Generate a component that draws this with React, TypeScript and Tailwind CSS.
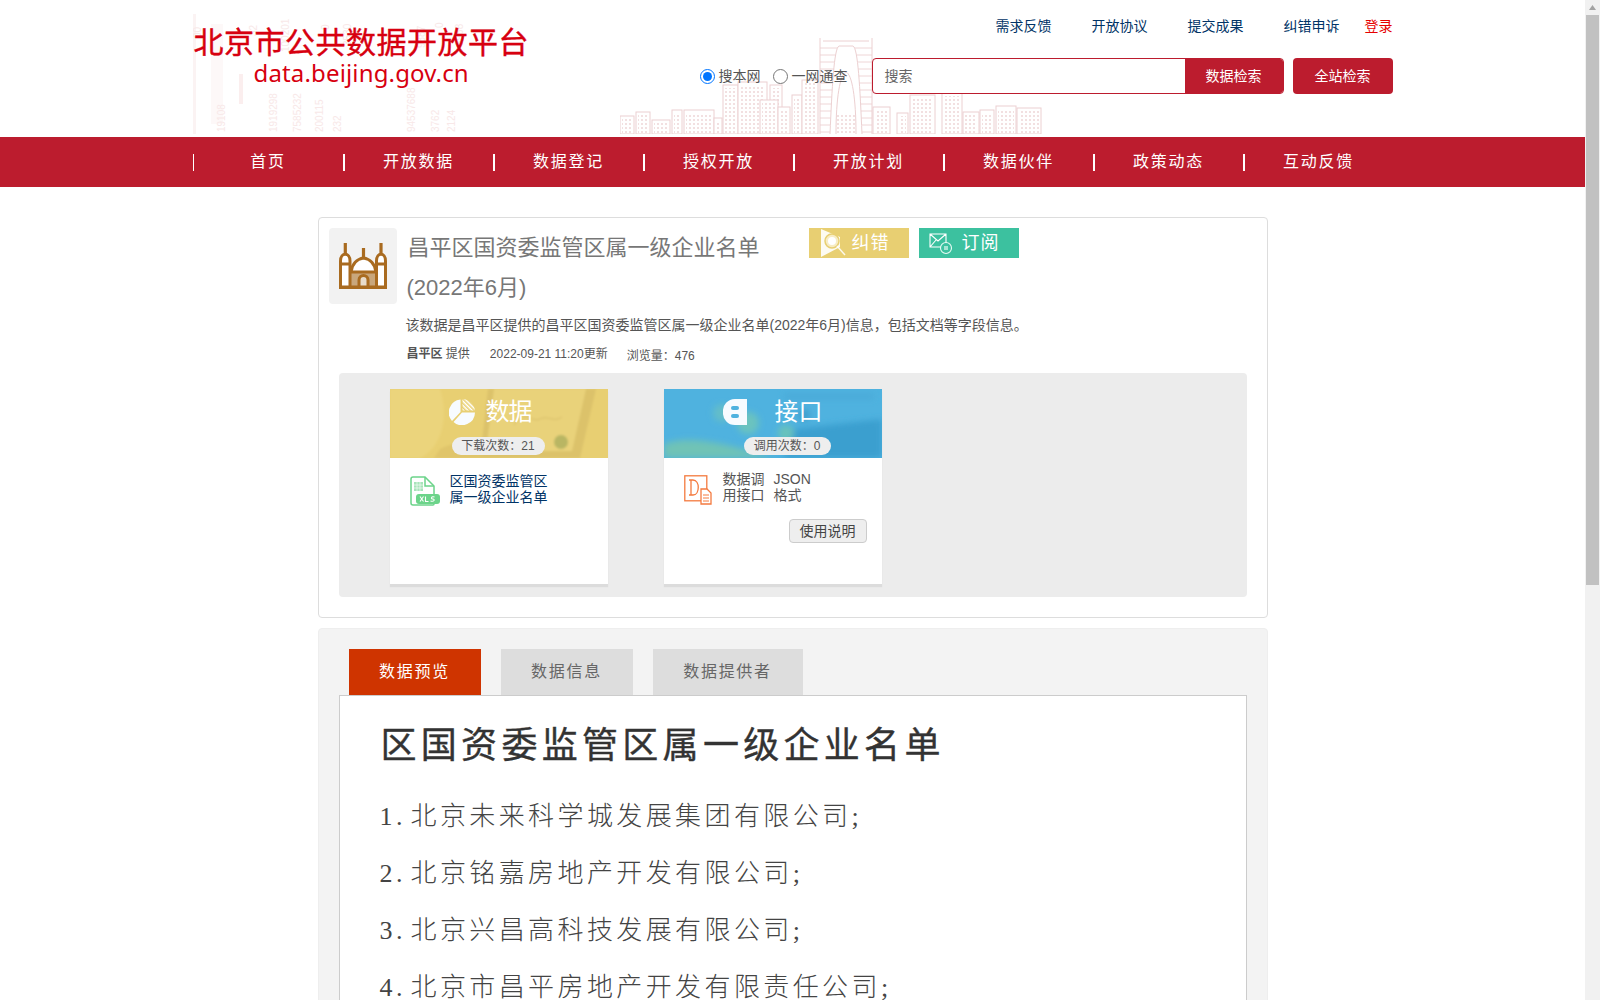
import React from "react";

const buildings: [number, number, number][] = [
  [0, 78, 14], [16, 74, 14], [32, 82, 18], [52, 72, 10], [64, 72, 30], [94, 80, 8],
  [103, 47, 15], [118, 44, 29], [150, 47, 12], [140, 62, 18], [158, 69, 12], [172, 57, 10], [182, 42, 16],
  [253, 69, 17], [277, 75, 11], [290, 57, 25], [322, 55, 20], [343, 74, 16], [360, 72, 14], [376, 68, 20], [397, 70, 24],
];

function Skyline() {
  return (
    <svg width="422" height="96" viewBox="0 0 422 96" fill="none" className="absolute left-[427px] top-[38px]">
      <defs>
        <pattern id="win" width="4" height="4" patternUnits="userSpaceOnUse">
          <rect x="1" y="1" width="2" height="2" fill="#f2e0e1" />
        </pattern>
        <pattern id="floors" width="52" height="7" patternUnits="userSpaceOnUse">
          <line x1="0" y1="3" x2="52" y2="3" stroke="#efd6d7" />
        </pattern>
      </defs>
      {buildings.map(([x, y, w], i) => (
        <g key={i}>
          <rect x={x} y={y} width={w} height={96 - y} fill="#fff" stroke="#ecd0d1" />
          <rect x={x + 2} y={y + 3} width={w - 4} height={93 - y} fill="url(#win)" />
        </g>
      ))}
      <rect x="200" y="4" width="52" height="92" fill="url(#floors)" />
      <path d="M200 0V96M252 0V96M203 3H249" stroke="#ecd0d1" />
      <path d="M210 96C212 50 214 10 219 8H233C238 10 240 50 242 96" fill="#fff" stroke="#ecd0d1" />
      <path d="M216 96C216 60 220 36 226 34C232 36 236 60 236 96" fill="#fff" stroke="#ecd0d1" />
      <rect x="216" y="76" width="20" height="20" fill="url(#win)" />
    </svg>
  );
}

function LogoBackdrop() {
  const cols: [number, number, string][] = [
    [8, 24, "00"], [64, 22, "32"], [96, 38, "100201"], [136, 16, "0"], [158, 32, "3530"], [232, 34, "9887"], [250, 14, "0"], [270, 32, "3968"],
    [32, 118, "19108"], [84, 118, "1919298"], [108, 118, "7585232"], [130, 118, "200115"], [148, 118, "232"], [222, 118, "94537688"], [246, 118, "3762"], [262, 118, "2124"],
  ];
  return (
    <svg width="330" height="120" viewBox="0 0 330 120" className="absolute left-0 top-[14px]">
      <rect x="0" y="0" width="3" height="120" fill="#fbf3f3" />
      <rect x="18" y="10" width="12" height="100" fill="#fdf8f8" />
      <rect x="46" y="60" width="4" height="30" fill="#fbeeee" />
      {cols.map(([x, y, t], i) => (
        <text key={i} transform={`translate(${x} ${y}) rotate(-90)`} fontSize="10" fontFamily="Liberation Sans" fill="#f8e8e8">
          {t}
        </text>
      ))}
    </svg>
  );
}

function Building() {
  return (
    <svg width="48" height="46" viewBox="0 0 48 46" fill="none">
      <path d="M12 45V29H37V45Z" fill="#c9a77c" />
      <path d="M12 29C13 21 18 16 24.500 15C31 16 36 21 37 29" stroke="#a96b20" strokeWidth="3" fill="#fff" />
      <path d="M1.500 45V18C1.500 9 11 9 11 18V45M37.500 45V18C37.500 9 46.500 9 46.500 18V45" stroke="#a96b20" strokeWidth="3" fill="#fff" />
      <path d="M1.500 21H11M37.500 21H46.500M11 29H38" stroke="#a96b20" strokeWidth="3" />
      <path d="M6.300 0V11M42 0V11M24.500 5V15" stroke="#a96b20" strokeWidth="3.200" />
      <path d="M20 45V37C20 31 29 31 29 37V45" stroke="#a96b20" strokeWidth="3" fill="#e8dccb" />
      <rect x="0" y="42.500" width="48" height="3.500" fill="#a96b20" />
    </svg>
  );
}

function SearchFlag() {
  return (
    <svg width="30" height="30" viewBox="0 0 30 30" fill="none">
      <path d="M1 1L20 9V19L1 29Z" fill="#fff" fillOpacity="0.9" />
      <circle cx="12" cy="13" r="7" fill="#f7ecc4" stroke="#e8cf72" strokeWidth="1.500" />
      <circle cx="12" cy="13" r="4" fill="#fff" />
      <path d="M17 18L25 27" stroke="#fff" strokeOpacity="0.85" strokeWidth="1.500" />
    </svg>
  );
}

function MailIcon() {
  return (
    <svg width="24" height="24" viewBox="0 0 24 24" fill="none">
      <path d="M1 3H17V16H1Z M1 3L9 10L17 3M1 16L7 9" stroke="#fff" strokeWidth="1.100" />
      <circle cx="17" cy="17" r="5.500" fill="#3cc19f" stroke="#e8fbf5" strokeWidth="1.100" />
      <rect x="15" y="15" width="4" height="4" fill="#a5e5d3" />
    </svg>
  );
}

function Pie() {
  return (
    <svg width="26" height="26" viewBox="0 0 26 26">
      <defs>
        <pattern id="hatch" width="3" height="3" patternUnits="userSpaceOnUse" patternTransform="rotate(45)">
          <rect width="3" height="1.500" fill="#fff" />
        </pattern>
      </defs>
      <path d="M11.500 0.500V13L3 22A13 13 0 0 1 11.500 0.500Z" fill="#f7fbff" />
      <path d="M13.500 0A13 13 0 0 1 26 11.500H13.500Z" fill="url(#hatch)" />
      <path d="M13 13.500H26A13 13 0 0 1 4.500 23Z" fill="#f7fbff" />
    </svg>
  );
}

function ApiIcon() {
  return (
    <svg width="24" height="26" viewBox="0 0 24 26">
      <path d="M12 0H24V26H12A12 12 0 0 1 0 13A12 12 0 0 1 12 0Z" fill="#f7fbff" />
      <rect x="8" y="7" width="8" height="4" rx="2" fill="#4fb2df" />
      <rect x="8" y="15" width="8" height="4" rx="2" fill="#4fb2df" />
    </svg>
  );
}

function XlsIcon() {
  return (
    <svg width="30" height="30" viewBox="0 0 30 30" fill="none">
      <path d="M1 3A2 2 0 0 1 3 1H15L24 10V28A1 1 0 0 1 23 29H3A2 2 0 0 1 1 27Z" fill="#fff" stroke="#6cd48a" strokeWidth="1.500" />
      <path d="M15 1V10H24" stroke="#6cd48a" strokeWidth="1.500" />
      <rect x="4" y="6" width="9" height="9" fill="#a8e4ba" />
      <path d="M4 9H13M4 12H13M7 6V15M10 6V15" stroke="#fff" strokeWidth="0.600" />
      <rect x="6" y="18" width="24" height="10" rx="3" fill="#6cd48a" />
      <path d="M10 20.500L13.500 25.500M13.500 20.500L10 25.500M15.500 20.500V25.500H18.500M24.500 21C21 20 20.500 23 23 23C25 23.300 24.500 26 20.500 25" stroke="#fff" strokeWidth="1.100" />
    </svg>
  );
}

function DocIcon() {
  return (
    <svg width="28" height="30" viewBox="0 0 28 30" fill="none">
      <rect x="0.800" y="0.800" width="22" height="25" fill="#fff" stroke="#f47a3f" strokeWidth="1.300" />
      <path d="M5 5H9C16 5 16 20 9 20H5M7 5V20" stroke="#f47a3f" strokeWidth="1.300" />
      <path d="M17 14H23L27 18V29H17Z" fill="#fff" stroke="#f47a3f" strokeWidth="1.300" />
      <path d="M19 20H25M19 23H25M19 26H25" stroke="#f47a3f" />
    </svg>
  );
}

function YellowArt() {
  return (
    <svg width="218" height="69" viewBox="0 0 218 69" className="absolute inset-0">
      <defs>
        <filter id="soft"><feGaussianBlur stdDeviation="1" /></filter>
      </defs>
      <rect width="218" height="69" fill="#e8cf72" />
      <g filter="url(#soft)">
        <path d="M0 0H50C60 30 50 60 30 69H0Z" fill="#ebd47c" />
        <path d="M98 0H206L190 69H90Z" fill="#dcc26a" />
        <path d="M104 0H196L182 62H96Z" fill="#e9d27a" />
        <path d="M124 36C134 20 142 34 150 30C158 26 164 34 172 28" stroke="#d8bf68" fill="none" />
        <circle cx="171" cy="53" r="7" fill="#b9b663" />
        <path d="M50 60C66 52 84 50 96 62L90 69H44Z" fill="#e0c56a" />
      </g>
    </svg>
  );
}

function BlueArt() {
  return (
    <svg width="218" height="69" viewBox="0 0 218 69" className="absolute inset-0">
      <defs>
        <filter id="softer"><feGaussianBlur stdDeviation="3" /></filter>
      </defs>
      <rect width="218" height="69" fill="#4fb2df" />
      <g filter="url(#softer)">
        <path d="M0 55C30 44 70 58 110 69H0Z" fill="#6fc3b6" />
        <path d="M130 40L218 30V69H120Z" fill="#3a9fcf" />
        <circle cx="58" cy="24" r="9" fill="#63bdc9" />
        <circle cx="84" cy="34" r="11" fill="#6ac3bf" />
        <circle cx="122" cy="44" r="8" fill="#69c2bc" />
        <circle cx="140" cy="26" r="6" fill="#3f9fcd" />
        <rect x="120" y="5" width="90" height="5" fill="#48a9d7" />
      </g>
    </svg>
  );
}

const navItems = ["首页", "开放数据", "数据登记", "授权开放", "开放计划", "数据伙伴", "政策动态", "互动反馈"];
const topLinks = ["需求反馈", "开放协议", "提交成果", "纠错申诉"];
const companies = [
  "北京未来科学城发展集团有限公司",
  "北京铭嘉房地产开发有限公司",
  "北京兴昌高科技发展有限公司",
  "北京市昌平房地产开发有限责任公司",
];

export default function App() {
  return (
    <div className="flex h-screen overflow-hidden bg-white font-['Liberation_Sans','Noto_Sans_CJK_SC',sans-serif]">
      <main className="min-w-0 flex-1 overflow-hidden">
        <header className="relative mx-auto flex h-[137px] w-[1200px] justify-between">
          <LogoBackdrop />
          <Skyline />
          <div className="relative pl-[1px] pt-[23px] text-[#d7000f]">
            <div className="text-[30px] font-normal leading-[40px] tracking-[0.5px] [-webkit-text-stroke:0.4px_#d7000f]">北京市公共数据开放平台</div>
            <div className="ml-[60px] mt-[-6px] font-['Noto_Sans','Noto_Sans_CJK_SC',sans-serif] text-[24px] leading-[32px] tracking-[0.15px]">data.beijing.gov.cn</div>
          </div>
          <div className="relative flex flex-col items-end">
            <div className="flex pt-[16px] text-[14px] leading-[20px]">
              {topLinks.map((t) => (
                <span key={t} className="mr-[40px] text-[#003366]">{t}</span>
              ))}
              <span className="ml-[-15px] text-[#e60000]">登录</span>
            </div>
            <div className="mt-[22px] flex items-center text-[14px] text-[#555]">
              <input type="radio" name="scope" defaultChecked className="m-0 h-[15px] w-[15px]" />
              <span className="ml-[4px]">搜本网</span>
              <input type="radio" name="scope" className="m-0 ml-[12px] h-[15px] w-[15px]" />
              <span className="ml-[4px] mr-[24px]">一网通查</span>
              <div className="flex h-[36px] w-[412px] overflow-hidden rounded-[4px] border border-[#bc1c2e] bg-white">
                <div className="flex-1 pl-[12px] leading-[34px] text-[#666]">搜索</div>
                <div className="w-[98px] bg-[#bc1c2e] text-center leading-[34px] text-white">数据检索</div>
              </div>
              <div className="ml-[9px] h-[36px] w-[100px] rounded-[4px] bg-[#bc1c2e] text-center leading-[36px] text-white">全站检索</div>
            </div>
          </div>
        </header>

        <nav className="h-[50px] bg-[#bc1c2e]">
          <div className="mx-auto flex h-full w-[1200px] items-center">
            {navItems.map((t) => (
              <div key={t} className="h-[17px] w-[150px] border-l-2 border-white text-center text-[16px] leading-[15px] tracking-[1.7px] text-white first:border-l">{t}</div>
            ))}
          </div>
        </nav>

        <section className="mx-auto mt-[30px] h-[401px] w-[950px] rounded-[4px] border border-[#ddd] bg-white p-[10px]">
          <div className="flex">
            <div className="flex h-[76px] w-[68px] items-center justify-center rounded-[4px] bg-[#f2f2f2]">
              <Building />
            </div>
            <div className="ml-[10px] flex-1">
              <div className="flex">
                <div className="w-[402px] text-[22px] leading-[40px] text-[#777]">
                  <div className="pl-[1px]">昌平区国资委监管区属一级企业名单</div>
                  <div>(2022年6月)</div>
                </div>
                <div className="flex gap-[10px]">
                  <div className="flex h-[30px] w-[100px] items-center bg-[#e8cf72] pl-[11px] text-[18px] tracking-[1px] text-white">
                    <SearchFlag />
                    <span className="ml-[2px]">纠错</span>
                  </div>
                  <div className="flex h-[30px] w-[100px] items-center bg-[#3cc19f] pl-[10px] text-[18px] tracking-[1px] text-white">
                    <MailIcon />
                    <span className="ml-[9px]">订阅</span>
                  </div>
                </div>
              </div>
              <div className="ml-[-1px] mt-[6px] text-[14px] leading-[22px] text-[#555]">该数据是昌平区提供的昌平区国资委监管区属一级企业名单(2022年6月)信息，包括文档等字段信息。</div>
              <div className="mt-[9px] flex text-[12px] leading-[18px] text-[#555]">
                <span><b>昌平区</b> 提供</span>
                <span className="ml-[20px]">2022-09-21 11:20更新</span>
                <span className="ml-[19px] mt-[2px]">浏览量：476</span>
              </div>
            </div>
          </div>

          <div className="mx-[10px] mt-[8px] flex h-[224px] gap-[56px] rounded-[4px] bg-[#ececec] pl-[51px] pt-[16px]">
            <div className="h-[195px] w-[218px] bg-white shadow-[0_3px_1px_#dcdcdc]">
              <div className="relative h-[69px] overflow-hidden pl-[59px] pt-[10px]">
                <YellowArt />
                <div className="relative flex h-[26px] items-center">
                  <Pie />
                  <span className="ml-[11px] text-[24px] tracking-[-1px] text-white">数据</span>
                </div>
                <div className="relative ml-[3px] mt-[12px] h-[18px] w-[93px] rounded-[9px] bg-[#eeeeee] text-center text-[12px] leading-[18px] text-[#555]">下载次数：21</div>
              </div>
              <div className="flex pl-[20px] pt-[15px]">
                <div className="mt-[3px]"><XlsIcon /></div>
                <div className="ml-[10px] w-[100px] text-[14px] leading-[16px] text-[#003366]">区国资委监管区属一级企业名单</div>
              </div>
            </div>
            <div className="h-[195px] w-[218px] bg-white shadow-[0_3px_1px_#dcdcdc]">
              <div className="relative h-[69px] overflow-hidden pl-[59px] pt-[10px]">
                <BlueArt />
                <div className="relative flex h-[26px] items-center">
                  <ApiIcon />
                  <span className="ml-[28px] text-[24px] text-white">接口</span>
                </div>
                <div className="relative ml-[21px] mt-[12px] h-[18px] w-[87px] rounded-[9px] bg-[#eeeeee] text-center text-[12px] leading-[18px] text-[#555]">调用次数：0</div>
              </div>
              <div className="flex pl-[20px] pt-[13px]">
                <div className="mt-[4px]"><DocIcon /></div>
                <div className="ml-[11px] w-[51px] text-[14px] leading-[16px] text-[#555]">数据调用接口</div>
                <div className="text-[14px] leading-[16px] text-[#555]"><div>JSON</div><div>格式</div></div>
              </div>
              <div className="ml-[125px] mt-[14px] h-[24px] w-[78px] rounded-[4px] border border-[#ccc] bg-[#eeeeee] text-center text-[14px] leading-[22px] text-[#444]">使用说明</div>
            </div>
          </div>
        </section>

        <section className="mx-auto mt-[10px] w-[950px] rounded-t-[4px] border border-[#eee] bg-[#f3f3f3] px-[20px] pt-[20px]">
          <div className="ml-[10px] flex gap-[20px] text-[16px] leading-[46px] tracking-[1.7px]">
            <div className="h-[46px] w-[132px] bg-[#cf3400] text-center text-white">数据预览</div>
            <div className="h-[46px] w-[132px] bg-[#dddddd] text-center text-[#666]">数据信息</div>
            <div className="h-[46px] w-[150px] bg-[#dddddd] text-center text-[#666]">数据提供者</div>
          </div>
          <div className="border border-[#ccc] bg-white pb-[20px] pl-[41px] pr-[40px] pt-[23px]">
            <h1 className="text-[36px] font-normal leading-[54px] tracking-[4.3px] text-[#333] [-webkit-text-stroke:0.4px_#333]">区国资委监管区属一级企业名单</h1>
            <ol className="ml-[-1px] mt-[15px] font-['Liberation_Serif','Noto_Sans_CJK_SC',serif] text-[26px] font-light leading-[57px] tracking-[3.4px] text-[#444]">
              {companies.map((c, i) => (
                <li key={c} className="flex">
                  <span className="w-[31px] shrink-0">{i + 1}.</span>
                  <span>{c};</span>
                </li>
              ))}
            </ol>
          </div>
        </section>
      </main>

      <aside className="flex h-full w-[15px] shrink-0 flex-col items-center bg-[#f1f1f1]">
        <svg width="15" height="15" viewBox="0 0 15 15" className="shrink-0">
          <path d="M7.500 5L11 10H4Z" fill="#a3a3a3" />
        </svg>
        <div className="h-[570px] w-[13px] bg-[#c1c1c1]" />
      </aside>
    </div>
  );
}
